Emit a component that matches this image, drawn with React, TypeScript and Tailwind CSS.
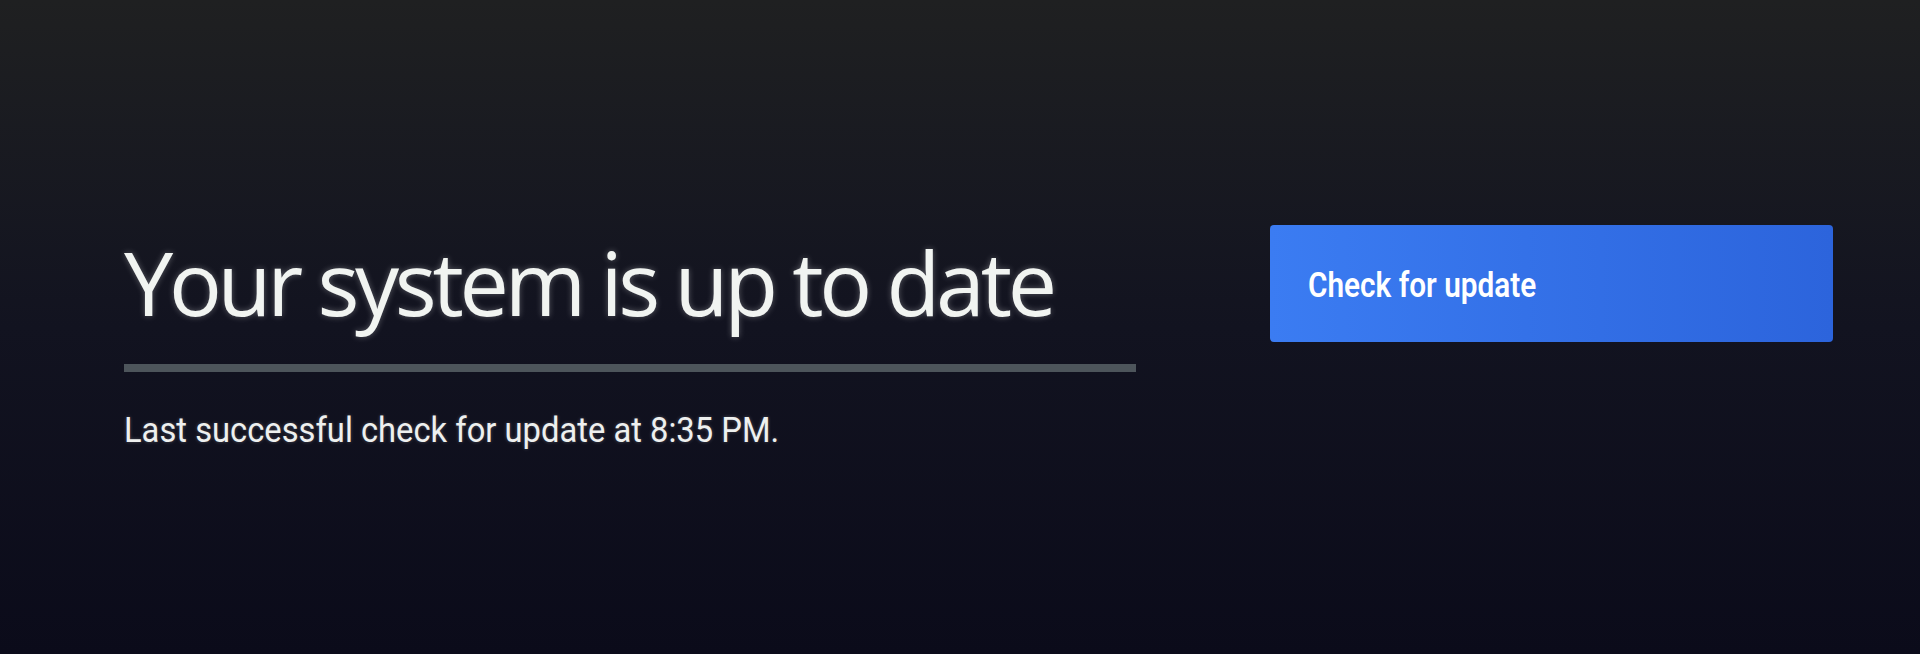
export default function App() {
  return (
    <div className="h-[654px] w-full overflow-hidden bg-linear-to-b from-[#1f2021] via-[#121320] to-[#0b0b1a]">
      <div className="flex items-start pl-[124px] pt-[225px]">
        {/* Status column */}
        <div className="w-[1012px] pt-[13px]">
          <h1
            className="whitespace-nowrap text-[88px] leading-none tracking-[-4.3px] text-[#f1f4f1] [text-shadow:0_0_6px_rgba(255,255,255,0.3)]"
            style={{ fontFamily: '"Open Sans", sans-serif' }}
          >
            Your system is up to date
          </h1>
          <div className="mt-[38px] h-[8px] w-full bg-[#4d555b]" />
          <p
            className="mt-[41px] whitespace-nowrap text-[35px] leading-none text-[#eef0ef] [text-shadow:0_0_4px_rgba(255,255,255,0.25)]"
            style={{ fontFamily: 'Roboto, sans-serif' }}
          >
            <span className="inline-block origin-left scale-x-[0.935]">
              Last successful check for update at 8:35 PM.
            </span>
          </p>
        </div>

        {/* Action */}
        <button
          className="ml-[134px] flex h-[117px] w-[563px] items-center rounded-[4px] bg-linear-to-r from-[#3b7cf2] to-[#2c64dc] pl-[38px] pt-[4px] text-left text-[35px] font-semibold leading-none text-white"
          style={{ fontFamily: 'Roboto, sans-serif' }}
        >
          <span className="inline-block origin-left scale-x-[0.85] whitespace-nowrap">Check for update</span>
        </button>
      </div>
    </div>
  );
}
